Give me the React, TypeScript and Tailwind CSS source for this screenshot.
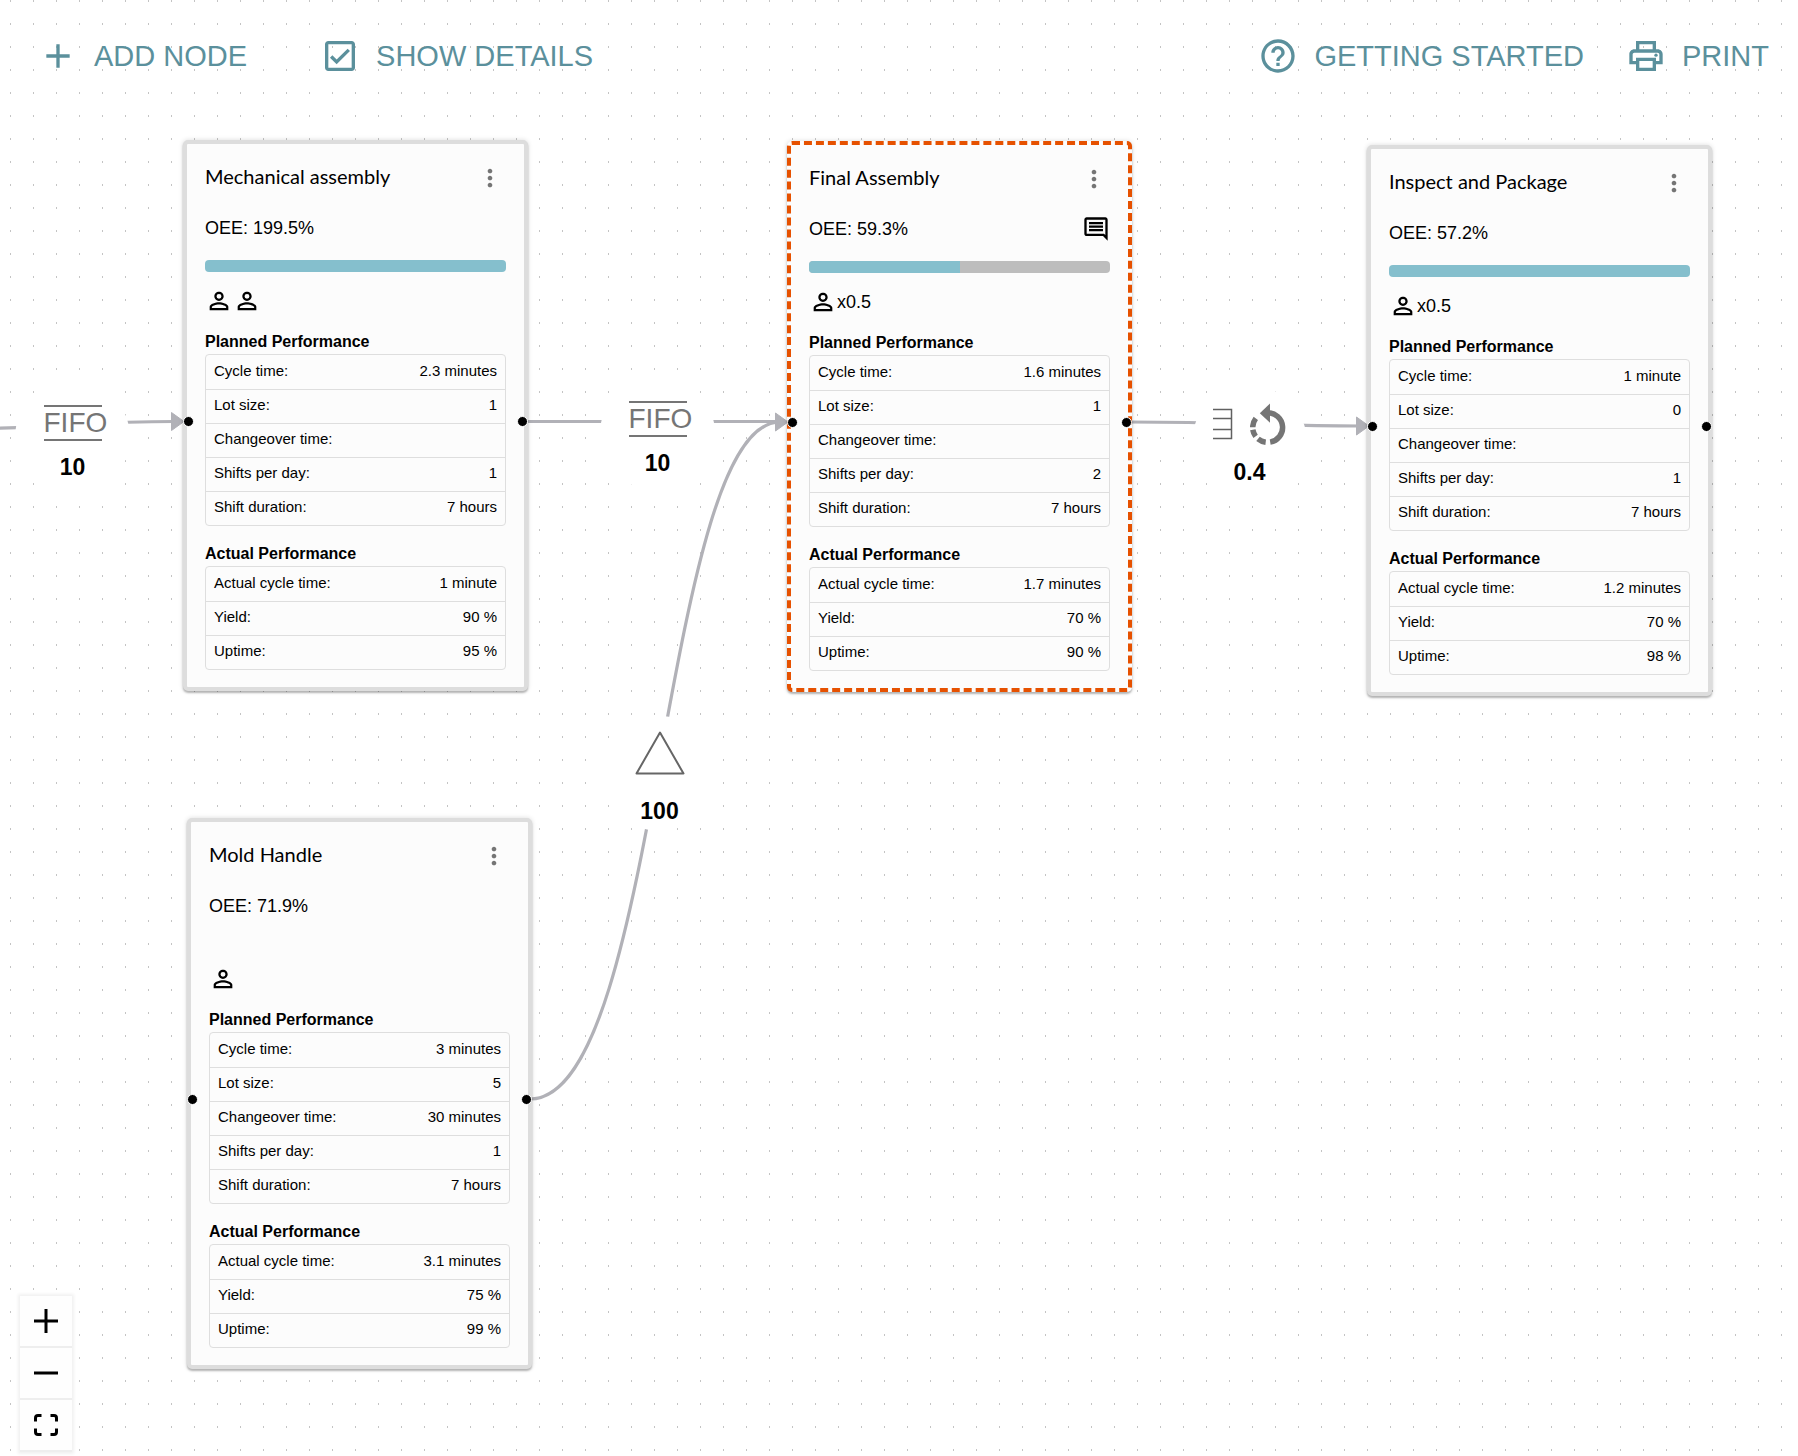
import type { ReactNode } from "react";
import {
  MdAdd,
  MdHelpOutline,
  MdMoreVert,
  MdOutlineCheckBox,
  MdOutlineComment,
  MdOutlinePrint,
  MdPersonOutline,
} from "react-icons/md";

type Row = [label: string, value: string];

interface ProcessNode {
  title: string;
  oee: string;
  progress?: number;
  operators: number;
  operatorNote?: string;
  hasComment?: boolean;
  selected?: boolean;
  planned: Row[];
  actual: Row[];
  place: string;
}

const nodes: ProcessNode[] = [
  {
    title: "Mechanical assembly",
    oee: "199.5%",
    progress: 100,
    operators: 2,
    planned: [
      ["Cycle time:", "2.3 minutes"],
      ["Lot size:", "1"],
      ["Changeover time:", ""],
      ["Shifts per day:", "1"],
      ["Shift duration:", "7 hours"],
    ],
    actual: [
      ["Actual cycle time:", "1 minute"],
      ["Yield:", "90 %"],
      ["Uptime:", "95 %"],
    ],
    place: "left-[183px] top-[140px]",
  },
  {
    title: "Final Assembly",
    oee: "59.3%",
    progress: 50,
    operators: 1,
    operatorNote: "x0.5",
    hasComment: true,
    selected: true,
    planned: [
      ["Cycle time:", "1.6 minutes"],
      ["Lot size:", "1"],
      ["Changeover time:", ""],
      ["Shifts per day:", "2"],
      ["Shift duration:", "7 hours"],
    ],
    actual: [
      ["Actual cycle time:", "1.7 minutes"],
      ["Yield:", "70 %"],
      ["Uptime:", "90 %"],
    ],
    place: "left-[787px] top-[141px]",
  },
  {
    title: "Inspect and Package",
    oee: "57.2%",
    progress: 100,
    operators: 1,
    operatorNote: "x0.5",
    planned: [
      ["Cycle time:", "1 minute"],
      ["Lot size:", "0"],
      ["Changeover time:", ""],
      ["Shifts per day:", "1"],
      ["Shift duration:", "7 hours"],
    ],
    actual: [
      ["Actual cycle time:", "1.2 minutes"],
      ["Yield:", "70 %"],
      ["Uptime:", "98 %"],
    ],
    place: "left-[1367px] top-[145px]",
  },
  {
    title: "Mold Handle",
    oee: "71.9%",
    operators: 1,
    planned: [
      ["Cycle time:", "3 minutes"],
      ["Lot size:", "5"],
      ["Changeover time:", "30 minutes"],
      ["Shifts per day:", "1"],
      ["Shift duration:", "7 hours"],
    ],
    actual: [
      ["Actual cycle time:", "3.1 minutes"],
      ["Yield:", "75 %"],
      ["Uptime:", "99 %"],
    ],
    place: "left-[187px] top-[818px]",
  },
];

function MetricTable({ title, rows }: { title: string; rows: Row[] }) {
  return (
    <table
      aria-label={title}
      className="w-full border-separate border-spacing-0 rounded-[4px] border border-[#dedede] text-[15px] leading-5"
    >
      <tbody>
        {rows.map(([label, value], i) => (
          <tr key={label}>
            <th
              scope="row"
              className={`h-[34px] pb-[3px] pl-2 text-left font-normal ${i > 0 ? "border-t border-[#dedede]" : ""}`}
            >
              {label}
            </th>
            <td className={`h-[34px] pr-2 pb-[3px] text-right ${i > 0 ? "border-t border-[#dedede]" : ""}`}>{value}</td>
          </tr>
        ))}
      </tbody>
    </table>
  );
}

function NodeCard({ node }: { node: ProcessNode }) {
  return (
    <article
      className={`absolute w-[345px] rounded-[5px] border-4 bg-[#fcfcfc] px-[18px] pt-[18px] pb-[17px] shadow-[0_2px_2px_rgba(0,0,0,0.25),0_0_5px_rgba(0,0,0,0.14)] ${
        node.selected ? "border-dashed border-[#e65100]" : "border-[#dddddd]"
      } ${node.place}`}
    >
      <header className="flex h-8 items-center justify-between">
        <h2 className="pb-1 font-['Lato'] text-xl leading-7">{node.title}</h2>
        <button type="button" aria-label={`${node.title} menu`} className="mr-0.5 text-[#757575]">
          <MdMoreVert className="size-7" />
        </button>
      </header>
      <div className="mt-5 flex h-7 items-center justify-between text-lg leading-7">
        <p>OEE: {node.oee}</p>
        {node.hasComment && <MdOutlineComment className="size-7" />}
      </div>
      <div className="mt-[18px] h-3 overflow-hidden rounded-[4px]">
        {node.progress !== undefined && (
          <div className="h-full bg-[#bdbdbd]">
            <div className="h-full bg-[#85bfcd]" style={{ width: `${node.progress}%` }} />
          </div>
        )}
      </div>
      <div className="mt-[15px] flex h-7 items-center text-lg leading-7">
        {Array.from({ length: node.operators }, (_, i) => (
          <MdPersonOutline key={i} className="size-7" />
        ))}
        {node.operatorNote && <span>{node.operatorNote}</span>}
      </div>
      <h3 className="mt-[15px] text-base leading-6 font-bold">Planned Performance</h3>
      <MetricTable title="Planned Performance" rows={node.planned} />
      <h3 className="mt-4 text-base leading-6 font-bold">Actual Performance</h3>
      <MetricTable title="Actual Performance" rows={node.actual} />
      <span className="absolute top-[272px] -left-1 size-[11px] rounded-full border border-white bg-black" />
      <span className="absolute top-[272px] -right-1 size-[11px] rounded-full border border-white bg-black" />
    </article>
  );
}

function EdgeLabel({ place, value, children }: { place: string; value: string; children: ReactNode }) {
  return (
    <div className={`absolute flex size-[115px] flex-col items-center rounded-full bg-white ${place}`}>
      {children}
      <span className="text-[23px] leading-6 font-bold">{value}</span>
    </div>
  );
}

function Fifo() {
  return (
    <div className="mb-[14px] h-9 w-[58px] border-y-2 border-[#757575] text-[28px] leading-8 whitespace-nowrap text-[#757575]">
      FIFO
    </div>
  );
}

function Edges() {
  return (
    <svg className="absolute inset-0 size-full" aria-hidden="true">
      <g fill="none" stroke="#b1b1b7" strokeWidth="3.2">
        <path d="M-40 429C60 428 90 421.5 174 421.5" />
        <path d="M527 421.5H778" />
        <path d="M530 1099C661 1099 661 422 780 422" />
        <path d="M1130 422C1240 422 1260 426 1360 426" />
      </g>
      <g fill="#b1b1b7" stroke="#b1b1b7" strokeWidth="1" strokeLinejoin="round">
        <path d="M171.500 412.500L184 421.500L171.500 430.500Z" />
        <path d="M775.500 413L788 422L775.500 431Z" />
        <path d="M1356.500 417L1369 426L1356.500 435Z" />
      </g>
    </svg>
  );
}

const toolClass = "flex items-center gap-4";
const controlClass = "flex size-[52px] items-center justify-center border-b-2 border-[#eeeeee] bg-[#fefefe]";

export default function App() {
  return (
    <main className="relative min-h-screen overflow-hidden bg-white font-['Liberation_Sans',sans-serif] text-black">
      <section aria-label="Value stream map" className="absolute inset-0">
        <svg className="absolute inset-0 size-full" aria-hidden="true">
          <defs>
            <pattern id="grid-dots" width="23" height="23" patternUnits="userSpaceOnUse">
              <rect x="10" y="0" width="1" height="2" fill="#c4c4c4" />
            </pattern>
          </defs>
          <rect width="100%" height="100%" fill="url(#grid-dots)" />
        </svg>
        <Edges />
        <EdgeLabel place="left-[15px] top-[380px] pt-[25px]" value="10">
          <Fifo />
        </EdgeLabel>
        <EdgeLabel place="left-[600px] top-[376px] pt-[25px]" value="10">
          <Fifo />
        </EdgeLabel>
        <EdgeLabel place="left-[1192px] top-[385px] pt-[18px]" value="0.4">
          <div className="mb-[15px] flex h-[42px] items-center gap-[17px]">
            <svg width="20" height="32" viewBox="0 0 20 32" fill="none" stroke="#616161" strokeWidth="1.500" aria-hidden="true">
              <path d="M0 1.500H18.500V30.500H0M0 10.500H18.500M0 21.500H18.500" />
            </svg>
            <svg width="36" height="42" viewBox="0 0 36 42" aria-hidden="true">
              <path
                d="M17.500 9.700A14.800 14.800 0 0 1 20.200 39.100M2.700 24.200A14.800 14.800 0 0 1 5.800 15.400M2.800 26.800A14.800 14.800 0 0 0 5.600 33.300M8 35.900A14.800 14.800 0 0 0 15.700 39.200"
                fill="none"
                stroke="#757575"
                strokeWidth="5.500"
              />
              <path d="M20 0.500V19.800L9.800 10.200Z" fill="#757575" />
            </svg>
          </div>
        </EdgeLabel>
        <EdgeLabel place="left-[602px] top-[716px] pt-[15px]" value="100">
          <svg className="mb-6 shrink-0" width="50" height="44" viewBox="0 0 50 44" fill="none" stroke="#666" strokeWidth="2" strokeLinejoin="round" aria-hidden="true">
            <path d="M25 1.500L48.500 42.500H1.500Z" />
          </svg>
        </EdgeLabel>
        {nodes.map((node) => (
          <NodeCard key={node.title} node={node} />
        ))}
      </section>

      <header className="relative flex h-28 items-center justify-between pr-[29px] pl-[38px] text-[29px] leading-10 text-[#5b909c]">
        <div className="flex items-center gap-[73px]">
          <button type="button" className={toolClass}>
            <MdAdd className="size-10" />
            ADD NODE
          </button>
          <label className={toolClass}>
            <input type="checkbox" defaultChecked className="sr-only" />
            <MdOutlineCheckBox className="size-10" />
            SHOW DETAILS
          </label>
        </div>
        <div className="flex items-center gap-[42px]">
          <button type="button" className={toolClass}>
            <MdHelpOutline className="size-10" />
            GETTING STARTED
          </button>
          <button type="button" className={toolClass}>
            <MdOutlinePrint className="size-10" />
            PRINT
          </button>
        </div>
      </header>

      <div className="absolute bottom-1 left-5 flex flex-col shadow-[0_0_3px_2px_rgba(0,0,0,0.06)]">
        <button type="button" aria-label="Zoom in" className={controlClass}>
          <svg width="24" height="24" viewBox="0 0 24 24" stroke="#000" strokeWidth="3" aria-hidden="true">
            <path d="M0 12H24M12 0V24" />
          </svg>
        </button>
        <button type="button" aria-label="Zoom out" className={controlClass}>
          <svg width="24" height="24" viewBox="0 0 24 24" stroke="#000" strokeWidth="3" aria-hidden="true">
            <path d="M0 12H24" />
          </svg>
        </button>
        <button type="button" aria-label="Fit view" className={controlClass}>
          <svg width="24" height="22" viewBox="0 0 24 22" fill="none" stroke="#000" strokeWidth="3" aria-hidden="true">
            <path d="M1.500 7.500V4Q1.500 1.500 4 1.500H7.500M16.500 1.500H20Q22.500 1.500 22.500 4V7.500M22.500 14.500V18Q22.500 20.500 20 20.500H16.500M7.500 20.500H4Q1.500 20.500 1.500 18V14.500" />
          </svg>
        </button>
      </div>
    </main>
  );
}
